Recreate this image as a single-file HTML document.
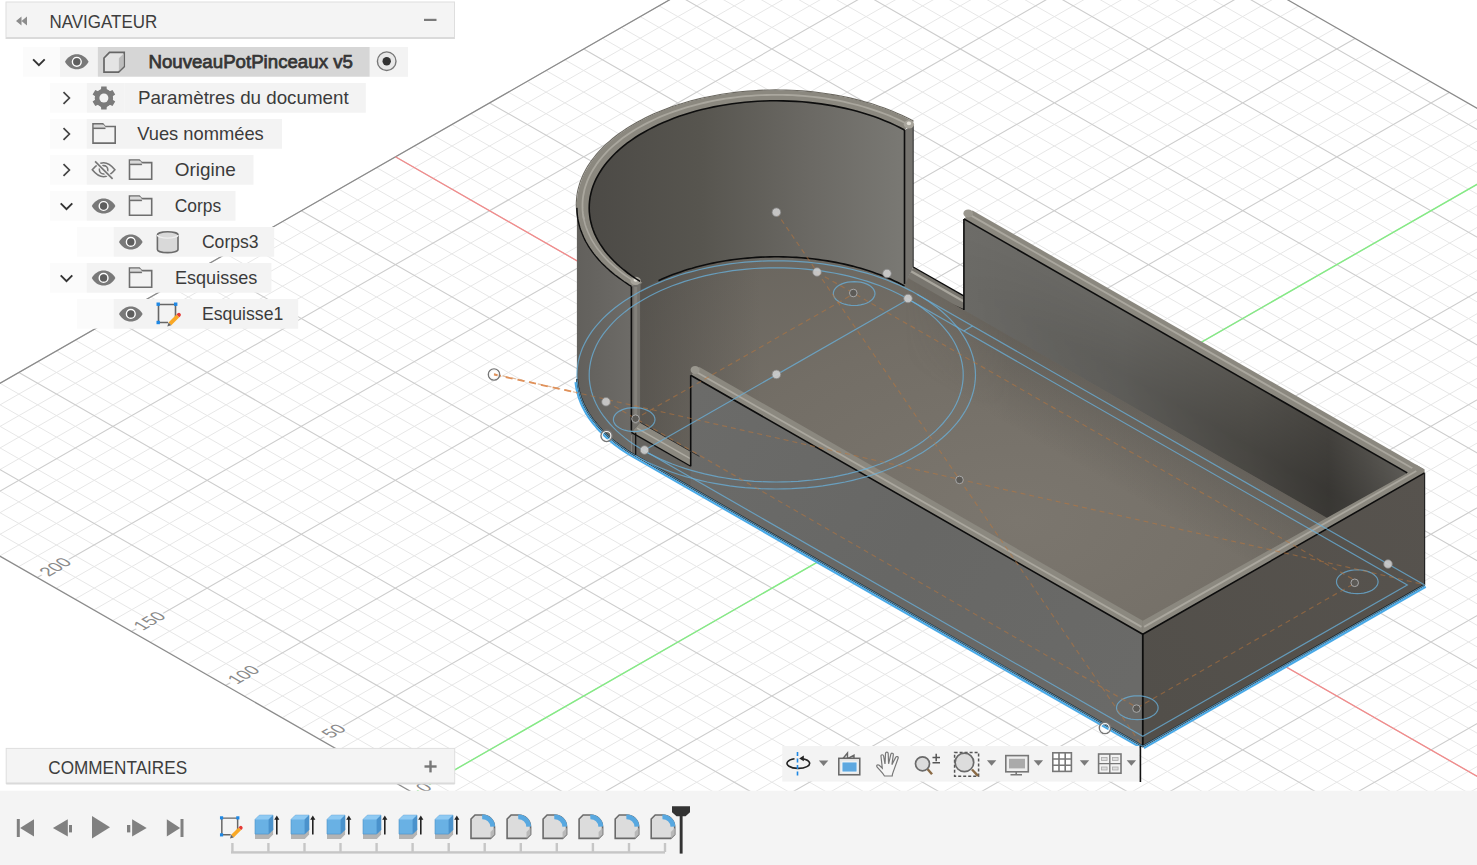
<!DOCTYPE html>
<html><head><meta charset="utf-8">
<style>
*{margin:0;padding:0}
html,body{width:1477px;height:865px;overflow:hidden;background:#fff}
</style></head><body>
<svg width="1477" height="865" viewBox="0 0 1477 865" style="position:absolute;left:0;top:0"><path d="M-132.2 480.6L997.4 -166.4M-113.4 491.4L1016.2 -155.6M-94.5 502.1L1035.1 -144.8M-75.7 512.9L1053.9 -134.1M-38.1 534.5L1091.5 -112.5M-19.2 545.3L1110.4 -101.7M-0.4 556.0L1129.2 -90.9M18.4 566.8L1148.0 -80.2M56.1 588.4L1185.7 -58.6M74.9 599.2L1204.5 -47.8M93.7 610.0L1223.3 -37.0M112.5 620.7L1242.2 -26.2M150.2 642.3L1279.8 -4.7M169.0 653.1L1298.6 6.1M187.9 663.9L1317.5 16.9M206.7 674.7L1336.3 27.7M244.3 696.2L1373.9 49.2M263.2 707.0L1392.8 60.0M282.0 717.8L1411.6 70.8M300.8 728.6L1430.4 81.6M338.5 750.1L1468.1 103.2M357.3 760.9L1486.9 113.9M376.1 771.7L1505.7 124.7M395.0 782.5L1524.6 135.5M432.6 804.1L1562.2 157.1M451.4 814.8L1581.0 167.9M470.3 825.6L1599.9 178.6M489.1 836.4L1618.7 189.4M526.7 858.0L1656.4 211.0M545.6 868.8L1675.2 221.8M564.4 879.5L1694.0 232.6M583.2 890.3L1712.8 243.3M620.9 911.9L1750.5 264.9M639.7 922.7L1769.3 275.7M658.5 933.5L1788.1 286.5M677.4 944.2L1807.0 297.3M715.0 965.8L1844.6 318.8M733.8 976.6L1863.4 329.6M752.7 987.4L1882.3 340.4M771.5 998.2L1901.1 351.2M809.1 1019.7L1938.8 372.7M828.0 1030.5L1957.6 383.5M846.8 1041.3L1976.4 394.3M865.6 1052.1L1995.2 405.1M903.3 1073.6L2032.9 426.7M922.1 1084.4L2051.7 437.4M940.9 1095.2L2070.5 448.2M959.8 1106.0L2089.4 459.0M997.4 1127.6L2127.0 480.6M1016.2 1138.3L2145.8 491.4M1035.1 1149.1L2164.7 502.1M1053.9 1159.9L2183.5 512.9M1091.5 1181.5L2221.2 534.5M1110.4 1192.2L2240.0 545.3M1129.2 1203.0L2258.8 556.0M1148.0 1213.8L2277.6 566.8M1185.7 1235.4L2315.3 588.4M1204.5 1246.2L2334.1 599.2M1223.3 1256.9L2352.9 610.0M1242.2 1267.7L2371.8 620.7M1279.8 1289.3L2409.4 642.3M1298.6 1300.1L2428.3 653.1M1317.5 1310.9L2447.1 663.9M1336.3 1321.6L2465.9 674.7M1373.9 1343.2L2503.6 696.2M1392.8 1354.0L2522.4 707.0M1411.6 1364.8L2541.2 717.8M1430.4 1375.6L2560.0 728.6M1468.1 1397.1L2597.7 750.1M1486.9 1407.9L2616.5 760.9M1505.7 1418.7L2635.3 771.7M1524.6 1429.5L2654.2 782.5M1562.2 1451.0L2691.8 804.1M1581.0 1461.8L2710.7 814.8M1599.9 1472.6L2729.5 825.6M1618.7 1483.4L2748.3 836.4M1656.4 1505.0L2786.0 858.0M1675.2 1515.7L2804.8 868.8M1694.0 1526.5L2823.6 879.5M-150.6 469.5L2135.4 1778.8M-131.7 458.7L2154.2 1768.0M-112.9 448.0L2173.1 1757.2M-94.1 437.2L2191.9 1746.5M-56.4 415.6L2229.6 1724.9M-37.6 404.8L2248.4 1714.1M-18.8 394.0L2267.2 1703.3M0.1 383.3L2286.0 1692.5M37.7 361.7L2323.7 1671.0M56.5 350.9L2342.5 1660.2M75.4 340.1L2361.3 1649.4M94.2 329.3L2380.2 1638.6M131.8 307.8L2417.8 1617.1M150.7 297.0L2436.7 1606.3M169.5 286.2L2455.5 1595.5M188.3 275.4L2474.3 1584.7M226.0 253.9L2512.0 1563.1M244.8 243.1L2530.8 1552.4M263.6 232.3L2549.6 1541.6M282.5 221.5L2568.4 1530.8M320.1 199.9L2606.1 1509.2M338.9 189.2L2624.9 1498.4M357.8 178.4L2643.7 1487.7M376.6 167.6L2662.6 1476.9M414.2 146.0L2700.2 1455.3M433.1 135.2L2719.1 1444.5M451.9 124.5L2737.9 1433.8M470.7 113.7L2756.7 1423.0M508.4 92.1L2794.4 1401.4M527.2 81.3L2813.2 1390.6M546.0 70.5L2832.0 1379.8M564.9 59.8L2850.8 1369.1M602.5 38.2L2888.5 1347.5M621.3 27.4L2907.3 1336.7M640.2 16.6L2926.1 1325.9M659.0 5.8L2945.0 1315.1M696.6 -15.7L2982.6 1293.6M715.5 -26.5L3001.5 1282.8M734.3 -37.3L3020.3 1272.0M753.1 -48.1L3039.1 1261.2M790.8 -69.6L3076.8 1239.7M809.6 -80.4L3095.6 1228.9M828.4 -91.2L3114.4 1218.1M847.3 -102.0L3133.2 1207.3M884.9 -123.6L3170.9 1185.7M903.7 -134.3L3189.7 1175.0M922.6 -145.1L3208.6 1164.2M941.4 -155.9L3227.4 1153.4" stroke="#e7e7e7" stroke-width="1" fill="none"/><path d="M-151.0 469.8L978.6 -177.2M-56.9 523.7L1072.7 -123.3M37.2 577.6L1166.9 -69.4M131.4 631.5L1261.0 -15.5M225.5 685.4L1355.1 38.5M319.6 739.4L1449.3 92.4M413.8 793.3L1543.4 146.3M507.9 847.2L1637.5 200.2M602.0 901.1L1731.7 254.1M696.2 955.0L1825.8 308.0M790.3 1008.9L1919.9 362.0M884.5 1062.9L2014.1 415.9M978.6 1116.8L2108.2 469.8M1072.7 1170.7L2202.3 523.7M1166.9 1224.6L2296.5 577.6M1261.0 1278.5L2390.6 631.5M1355.1 1332.4L2484.7 685.4M1449.3 1386.3L2578.9 739.4M1543.4 1440.3L2673.0 793.3M1637.5 1494.2L2767.1 847.2M-75.3 426.4L2210.7 1735.7M18.9 372.5L2304.9 1681.8M113.0 318.6L2399.0 1627.8M207.2 264.6L2493.1 1573.9M301.3 210.7L2587.3 1520.0M395.4 156.8L2681.4 1466.1M489.6 102.9L2775.5 1412.2M583.7 49.0L2869.7 1358.3M677.8 -4.9L2963.8 1304.4M772.0 -58.9L3057.9 1250.4M866.1 -112.8L3152.1 1196.5M960.2 -166.7L3246.2 1142.6" stroke="#cdcdcd" stroke-width="1.1" fill="none"/><path d="M-151.0 469.8L978.6 -177.2M-151.0 469.8L2135.0 1779.1M978.6 -177.2L3264.6 1132.1" stroke="#8a8a8a" stroke-width="1.2" fill="none"/><line x1="395.4" y1="156.8" x2="2681.4" y2="1466.1" stroke="#f48a8a" stroke-width="1.3"/><line x1="413.8" y1="793.3" x2="1543.4" y2="146.3" stroke="#84ec84" stroke-width="1.4"/><g transform="matrix(0.866 -0.496 0.866 0.496 413.8 793.3)"><rect x="5.5" y="-8" width="12.3" height="14.5" fill="#fff"/><text x="7.2" y="6" font-size="18.5" fill="#8a8a8a" font-family="Liberation Sans, sans-serif" textLength="9.3" lengthAdjust="spacingAndGlyphs">0</text></g><g transform="matrix(0.866 -0.496 0.866 0.496 319.6 739.4)"><rect x="5.5" y="-8" width="21.7" height="14.5" fill="#fff"/><text x="7.2" y="6" font-size="18.5" fill="#8a8a8a" font-family="Liberation Sans, sans-serif" textLength="18.7" lengthAdjust="spacingAndGlyphs">50</text></g><g transform="matrix(0.866 -0.496 0.866 0.496 225.5 685.4)"><rect x="5.5" y="-8" width="31.0" height="14.5" fill="#fff"/><text x="7.2" y="6" font-size="18.5" fill="#8a8a8a" font-family="Liberation Sans, sans-serif" textLength="28.0" lengthAdjust="spacingAndGlyphs">100</text></g><g transform="matrix(0.866 -0.496 0.866 0.496 131.4 631.5)"><rect x="5.5" y="-8" width="31.0" height="14.5" fill="#fff"/><text x="7.2" y="6" font-size="18.5" fill="#8a8a8a" font-family="Liberation Sans, sans-serif" textLength="28.0" lengthAdjust="spacingAndGlyphs">150</text></g><g transform="matrix(0.866 -0.496 0.866 0.496 37.2 577.6)"><rect x="5.5" y="-8" width="31.0" height="14.5" fill="#fff"/><text x="7.2" y="6" font-size="18.5" fill="#8a8a8a" font-family="Liberation Sans, sans-serif" textLength="28.0" lengthAdjust="spacingAndGlyphs">200</text></g><defs>
<linearGradient id="gInner" x1="590" y1="0" x2="905" y2="0" gradientUnits="userSpaceOnUse">
<stop offset="0" stop-color="#4c4a46"/><stop offset="0.35" stop-color="#57554f"/><stop offset="0.7" stop-color="#6b6964"/><stop offset="1" stop-color="#7a7974"/></linearGradient>
<linearGradient id="gBack" x1="963" y1="0" x2="1420" y2="0" gradientUnits="userSpaceOnUse">
<stop offset="0" stop-color="#6e6d69"/><stop offset="0.35" stop-color="#676662"/><stop offset="0.62" stop-color="#56544f"/><stop offset="0.8" stop-color="#44423e"/><stop offset="1" stop-color="#62605b"/></linearGradient>
<radialGradient id="gFloor" cx="1020" cy="520" r="520" gradientUnits="userSpaceOnUse" gradientTransform="translate(1020 520) scale(1 0.6) rotate(28) translate(-1020 -520)">
<stop offset="0" stop-color="#7b766e"/><stop offset="0.6" stop-color="#736e66"/><stop offset="1" stop-color="#6a665f"/></radialGradient>
<linearGradient id="gOuterCyl" x1="577" y1="0" x2="636" y2="0" gradientUnits="userSpaceOnUse">
<stop offset="0" stop-color="#62605c"/><stop offset="1" stop-color="#6e6c68"/></linearGradient>
<linearGradient id="gFront" x1="690" y1="400" x2="1140" y2="680" gradientUnits="userSpaceOnUse">
<stop offset="0" stop-color="#6b6b69"/><stop offset="0.5" stop-color="#676765"/><stop offset="1" stop-color="#6a6a68"/></linearGradient>
<linearGradient id="gEnd" x1="1143" y1="700" x2="1425" y2="480" gradientUnits="userSpaceOnUse">
<stop offset="0" stop-color="#524f4a"/><stop offset="1" stop-color="#57534e"/></linearGradient>
</defs><polygon points="640.1,281.4 635.8,278.7 631.7,275.9 627.7,273.0 623.9,270.0 620.3,267.0 616.8,263.9 613.6,260.8 610.5,257.5 607.6,254.3 604.9,250.9 602.5,247.5 600.2,244.1 598.1,240.6 596.3,237.1 594.6,233.6 593.2,230.0 592.0,226.4 591.0,222.8 590.2,219.1 589.7,215.5 589.3,211.8 589.2,208.2 589.3,204.5 589.6,200.8 590.1,197.2 590.9,193.5 591.8,189.9 593.0,186.3 594.4,182.7 596.0,179.2 597.9,175.6 599.9,172.2 602.1,168.7 604.6,165.3 607.2,162.0 610.1,158.7 613.1,155.5 616.3,152.3 619.8,149.2 623.4,146.2 627.1,143.2 631.1,140.3 635.2,137.5 639.5,134.8 644.0,132.2 648.6,129.6 653.3,127.2 658.2,124.8 663.3,122.5 668.4,120.4 673.7,118.3 679.1,116.3 684.7,114.5 690.3,112.8 696.1,111.1 701.9,109.6 707.8,108.2 713.8,106.9 719.9,105.8 726.0,104.7 732.2,103.8 738.5,103.0 744.8,102.3 751.1,101.8 757.5,101.3 763.8,101.0 770.2,100.8 776.6,100.8 783.1,100.9 789.4,101.1 795.8,101.4 802.2,101.8 808.5,102.4 814.8,103.1 821.0,103.9 827.2,104.9 833.4,105.9 839.4,107.1 845.4,108.4 851.3,109.8 857.1,111.3 862.9,113.0 868.5,114.7 874.0,116.6 879.4,118.6 884.7,120.7 889.8,122.8 894.9,125.1 899.7,127.5 904.5,130.0 904.5,289.0 899.7,286.5 894.9,284.1 889.8,281.8 884.7,279.7 879.4,277.6 874.0,275.6 868.5,273.7 862.9,272.0 857.1,270.3 851.3,268.8 845.4,267.4 839.4,266.1 833.4,264.9 827.2,263.9 821.0,262.9 814.8,262.1 808.5,261.4 802.2,260.8 795.8,260.4 789.4,260.1 783.1,259.9 776.6,259.8 770.2,259.8 763.8,260.0 757.5,260.3 751.1,260.8 744.8,261.3 738.5,262.0 732.2,262.8 726.0,263.7 719.9,264.8 713.8,265.9 707.8,267.2 701.9,268.6 696.1,270.1 690.3,271.8 684.7,273.5 679.1,275.3 673.7,277.3 668.4,279.4 663.3,281.5 658.2,283.8 653.3,286.2 648.6,288.6 644.0,291.2 639.5,293.8 635.2,296.5 631.1,299.3 627.1,302.2 623.4,305.2 619.8,308.2 616.3,311.3 613.1,314.5 610.1,317.7 607.2,321.0 604.6,324.3 602.1,327.7 599.9,331.2 597.9,334.6 596.0,338.2 594.4,341.7 593.0,345.3 591.8,348.9 590.9,352.5 590.1,356.2 589.6,359.8 589.3,363.5 589.2,367.2 589.3,370.8 589.7,374.5 590.2,378.1 591.0,381.8 592.0,385.4 593.2,389.0 594.6,392.6 596.3,396.1 598.1,399.6 600.2,403.1 602.5,406.5 604.9,409.9 607.6,413.3 610.5,416.5 613.6,419.8 616.8,422.9 620.3,426.0 623.9,429.0 627.7,432.0 631.7,434.9 635.8,437.7 640.1,440.4" fill="url(#gInner)" /><polygon points="904.5,283.9 913.2,267.0 972.5,300.9 963.9,309.9" fill="#78756e" /><polyline points="911.0,271.2 967.8,303.7" fill="none" stroke="#a9a69d" stroke-width="2.2" /><polyline points="913.2,267.0 972.5,300.9" fill="none" stroke="#0d0d0d" stroke-width="1.4" /><polyline points="904.5,283.9 963.9,309.9" fill="none" stroke="#0d0d0d" stroke-width="1.4" /><polygon points="963.9,312.9 963.9,218.9 1407.3,472.9 1407.3,566.9" fill="url(#gBack)" /><linearGradient id="gBackV" gradientUnits="userSpaceOnUse" x1="1168.2" y1="336.0" x2="1118.6" y2="422.6"><stop offset="0" stop-color="#000" stop-opacity="0"/><stop offset="0.55" stop-color="#000" stop-opacity="0.62"/><stop offset="1" stop-color="#000" stop-opacity="0.5"/></linearGradient><linearGradient id="gBackH" gradientUnits="userSpaceOnUse" x1="963" y1="0" x2="1420" y2="0"><stop offset="0" stop-color="#fff" stop-opacity="0.05"/><stop offset="0.6" stop-color="#fff" stop-opacity="0.25"/><stop offset="1" stop-color="#fff" stop-opacity="0.3"/></linearGradient><mask id="mBack" maskUnits="userSpaceOnUse" x="0" y="0" width="1477" height="865"><polygon points="963.9,312.9 963.9,218.9 1407.3,472.9 1407.3,566.9" fill="url(#gBackH)"/></mask><polygon points="963.9,312.9 963.9,218.9 1407.3,472.9 1407.3,566.9" fill="url(#gBackV)" mask="url(#mBack)"/><polygon points="640.1,437.4 635.8,434.7 631.7,431.9 627.7,429.0 623.9,426.0 620.3,423.0 616.8,419.9 613.6,416.8 610.5,413.5 607.6,410.3 604.9,406.9 602.5,403.5 600.2,400.1 598.1,396.6 596.3,393.1 594.6,389.6 593.2,386.0 592.0,382.4 591.0,378.8 590.2,375.1 589.7,371.5 589.3,367.8 589.2,364.2 589.3,360.5 589.6,356.8 590.1,353.2 590.9,349.5 591.8,345.9 593.0,342.3 594.4,338.7 596.0,335.2 597.9,331.6 599.9,328.2 602.1,324.7 604.6,321.3 607.2,318.0 610.1,314.7 613.1,311.5 616.3,308.3 619.8,305.2 623.4,302.2 627.1,299.2 631.1,296.3 635.2,293.5 639.5,290.8 644.0,288.2 648.6,285.6 653.3,283.2 658.2,280.8 663.3,278.5 668.4,276.4 673.7,274.3 679.1,272.3 684.7,270.5 690.3,268.8 696.1,267.1 701.9,265.6 707.8,264.2 713.8,262.9 719.9,261.8 726.0,260.7 732.2,259.8 738.5,259.0 744.8,258.3 751.1,257.8 757.5,257.3 763.8,257.0 770.2,256.8 776.6,256.8 783.1,256.9 789.4,257.1 795.8,257.4 802.2,257.8 808.5,258.4 814.8,259.1 821.0,259.9 827.2,260.9 833.4,261.9 839.4,263.1 845.4,264.4 851.3,265.8 857.1,267.3 862.9,269.0 868.5,270.7 874.0,272.6 879.4,274.6 884.7,276.7 889.8,278.8 894.9,281.1 899.7,283.5 904.5,286.0 904.5,275.9 1407.3,563.9 1142.8,715.3 640.1,427.4" fill="url(#gFloor)" /><linearGradient id="gAO" gradientUnits="userSpaceOnUse" x1="1168.2" y1="427.0" x2="1129.9" y2="493.9"><stop offset="0" stop-color="#4a4844" stop-opacity="0.35"/><stop offset="1" stop-color="#4a4844" stop-opacity="0"/></linearGradient><linearGradient id="gAOm" gradientUnits="userSpaceOnUse" x1="905" y1="0" x2="1010" y2="0"><stop offset="0" stop-color="#fff" stop-opacity="0"/><stop offset="1" stop-color="#fff" stop-opacity="1"/></linearGradient><mask id="mAO" maskUnits="userSpaceOnUse" x="0" y="0" width="1477" height="865"><rect x="0" y="0" width="1477" height="865" fill="url(#gAOm)"/></mask><polygon points="640.1,437.4 635.8,434.7 631.7,431.9 627.7,429.0 623.9,426.0 620.3,423.0 616.8,419.9 613.6,416.8 610.5,413.5 607.6,410.3 604.9,406.9 602.5,403.5 600.2,400.1 598.1,396.6 596.3,393.1 594.6,389.6 593.2,386.0 592.0,382.4 591.0,378.8 590.2,375.1 589.7,371.5 589.3,367.8 589.2,364.2 589.3,360.5 589.6,356.8 590.1,353.2 590.9,349.5 591.8,345.9 593.0,342.3 594.4,338.7 596.0,335.2 597.9,331.6 599.9,328.2 602.1,324.7 604.6,321.3 607.2,318.0 610.1,314.7 613.1,311.5 616.3,308.3 619.8,305.2 623.4,302.2 627.1,299.2 631.1,296.3 635.2,293.5 639.5,290.8 644.0,288.2 648.6,285.6 653.3,283.2 658.2,280.8 663.3,278.5 668.4,276.4 673.7,274.3 679.1,272.3 684.7,270.5 690.3,268.8 696.1,267.1 701.9,265.6 707.8,264.2 713.8,262.9 719.9,261.8 726.0,260.7 732.2,259.8 738.5,259.0 744.8,258.3 751.1,257.8 757.5,257.3 763.8,257.0 770.2,256.8 776.6,256.8 783.1,256.9 789.4,257.1 795.8,257.4 802.2,257.8 808.5,258.4 814.8,259.1 821.0,259.9 827.2,260.9 833.4,261.9 839.4,263.1 845.4,264.4 851.3,265.8 857.1,267.3 862.9,269.0 868.5,270.7 874.0,272.6 879.4,274.6 884.7,276.7 889.8,278.8 894.9,281.1 899.7,283.5 904.5,286.0 904.5,275.9 1407.3,563.9 1142.8,715.3 640.1,427.4" fill="url(#gAO)" mask="url(#mAO)"/><linearGradient id="gAOL" gradientUnits="userSpaceOnUse" x1="636" y1="0" x2="760" y2="0"><stop offset="0" stop-color="#3e3c39" stop-opacity="0.45"/><stop offset="1" stop-color="#3e3c39" stop-opacity="0"/></linearGradient><polygon points="640.1,437.4 635.8,434.7 631.7,431.9 627.7,429.0 623.9,426.0 620.3,423.0 616.8,419.9 613.6,416.8 610.5,413.5 607.6,410.3 604.9,406.9 602.5,403.5 600.2,400.1 598.1,396.6 596.3,393.1 594.6,389.6 593.2,386.0 592.0,382.4 591.0,378.8 590.2,375.1 589.7,371.5 589.3,367.8 589.2,364.2 589.3,360.5 589.6,356.8 590.1,353.2 590.9,349.5 591.8,345.9 593.0,342.3 594.4,338.7 596.0,335.2 597.9,331.6 599.9,328.2 602.1,324.7 604.6,321.3 607.2,318.0 610.1,314.7 613.1,311.5 616.3,308.3 619.8,305.2 623.4,302.2 627.1,299.2 631.1,296.3 635.2,293.5 639.5,290.8 644.0,288.2 648.6,285.6 653.3,283.2 658.2,280.8 663.3,278.5 668.4,276.4 673.7,274.3 679.1,272.3 684.7,270.5 690.3,268.8 696.1,267.1 701.9,265.6 707.8,264.2 713.8,262.9 719.9,261.8 726.0,260.7 732.2,259.8 738.5,259.0 744.8,258.3 751.1,257.8 757.5,257.3 763.8,257.0 770.2,256.8 776.6,256.8 783.1,256.9 789.4,257.1 795.8,257.4 802.2,257.8 808.5,258.4 814.8,259.1 821.0,259.9 827.2,260.9 833.4,261.9 839.4,263.1 845.4,264.4 851.3,265.8 857.1,267.3 862.9,269.0 868.5,270.7 874.0,272.6 879.4,274.6 884.7,276.7 889.8,278.8 894.9,281.1 899.7,283.5 904.5,286.0 904.5,275.9 1407.3,563.9 1142.8,715.3 640.1,427.4" fill="url(#gAOL)" /><polygon points="631.5,282.8 626.8,279.9 622.4,277.0 618.2,273.9 614.1,270.8 610.2,267.5 606.5,264.2 603.1,260.9 599.8,257.4 596.7,253.9 593.8,250.4 591.2,246.8 588.8,243.1 586.6,239.4 584.6,235.7 582.8,231.9 581.3,228.1 580.0,224.2 578.9,220.4 578.1,216.5 577.5,212.6 577.1,208.7 576.9,204.8 577.0,200.9 577.4,197.0 577.9,193.1 578.7,189.2 579.8,185.3 581.0,181.5 582.5,177.6 584.2,173.8 586.2,170.1 588.3,166.4 590.7,162.7 593.3,159.1 596.1,155.5 599.2,152.0 602.4,148.6 605.8,145.2 609.5,141.9 613.3,138.7 617.4,135.5 621.6,132.4 626.0,129.4 630.6,126.5 635.3,123.7 640.2,121.0 645.3,118.4 650.5,115.8 655.9,113.4 661.4,111.1 667.1,108.9 672.8,106.8 678.7,104.9 684.8,103.0 690.9,101.3 697.1,99.7 703.4,98.2 709.8,96.8 716.3,95.6 722.9,94.4 729.5,93.5 736.1,92.6 742.9,91.9 749.6,91.3 756.4,90.8 763.2,90.5 770.0,90.3 776.9,90.3 783.7,90.4 790.5,90.6 797.3,90.9 804.1,91.4 810.8,92.0 817.6,92.8 824.2,93.6 830.8,94.6 837.4,95.8 843.8,97.0 850.2,98.4 856.5,100.0 862.7,101.6 868.8,103.4 874.8,105.2 880.7,107.2 886.4,109.3 892.1,111.6 897.6,113.9 902.9,116.3 908.1,118.9 913.1,121.5 904.5,130.0 899.7,127.5 894.9,125.1 889.8,122.8 884.7,120.7 879.4,118.6 874.0,116.6 868.5,114.7 862.9,113.0 857.1,111.3 851.3,109.8 845.4,108.4 839.4,107.1 833.4,105.9 827.2,104.9 821.0,103.9 814.8,103.1 808.5,102.4 802.2,101.8 795.8,101.4 789.4,101.1 783.1,100.9 776.6,100.8 770.2,100.8 763.8,101.0 757.5,101.3 751.1,101.8 744.8,102.3 738.5,103.0 732.2,103.8 726.0,104.7 719.9,105.8 713.8,106.9 707.8,108.2 701.9,109.6 696.1,111.1 690.3,112.8 684.7,114.5 679.1,116.3 673.7,118.3 668.4,120.4 663.3,122.5 658.2,124.8 653.3,127.2 648.6,129.6 644.0,132.2 639.5,134.8 635.2,137.5 631.1,140.3 627.1,143.2 623.4,146.2 619.8,149.2 616.3,152.3 613.1,155.5 610.1,158.7 607.2,162.0 604.6,165.3 602.1,168.7 599.9,172.2 597.9,175.6 596.0,179.2 594.4,182.7 593.0,186.3 591.8,189.9 590.9,193.5 590.1,197.2 589.6,200.8 589.3,204.5 589.2,208.2 589.3,211.8 589.7,215.5 590.2,219.1 591.0,222.8 592.0,226.4 593.2,230.0 594.6,233.6 596.3,237.1 598.1,240.6 600.2,244.1 602.5,247.5 604.9,250.9 607.6,254.3 610.5,257.5 613.6,260.8 616.8,263.9 620.3,267.0 623.9,270.0 627.7,273.0 631.7,275.9 635.8,278.7 640.1,281.4" fill="#8b887f" /><polygon points="633.9,287.8 630.3,285.6 626.8,283.4 623.5,281.2 620.2,278.9 617.0,276.6 614.0,274.2 611.0,271.7 608.2,269.3 605.5,266.8 602.9,264.2 600.4,261.6 598.0,259.0 595.8,256.3 593.6,253.6 591.6,250.9 589.7,248.1 588.0,245.4 586.3,242.6 584.8,239.7 583.5,236.9 582.2,234.0 581.1,231.1 580.1,228.2 579.3,225.3 578.5,222.4 578.0,219.4 577.5,216.5 577.2,213.5 577.0,210.6 576.9,207.6 577.0,204.7 577.2,201.7 577.6,198.7 578.1,195.8 578.7,192.9 579.4,189.9 580.3,187.0 581.3,184.1 582.5,181.2 583.7,178.4 595.6,180.2 594.4,182.9 593.3,185.6 592.3,188.3 591.5,191.0 590.8,193.8 590.2,196.5 589.8,199.3 589.5,202.0 589.3,204.8 589.2,207.6 589.2,210.3 589.4,213.1 589.7,215.9 590.1,218.6 590.7,221.4 591.4,224.1 592.1,226.9 593.1,229.6 594.1,232.3 595.3,235.0 596.6,237.7 598.0,240.3 599.5,243.0 601.1,245.6 602.9,248.1 604.8,250.7 606.8,253.2 608.9,255.7 611.1,258.2 613.4,260.6 615.8,263.0 618.4,265.4 621.0,267.7 623.8,270.0 626.6,272.2 629.6,274.4 632.7,276.6 635.8,278.7 639.0,280.7 642.4,282.7" fill="#8b887f" /><polyline points="577.8,218.4 577.2,215.3 576.8,212.1 576.5,209.0 576.3,205.9 576.3,202.8 576.5,199.7 576.8,196.6 577.2,193.5 577.8,190.4 578.6,187.3 579.5,184.2 580.5,181.1 581.7,178.1 583.0,175.1 584.5,172.1 586.1,169.1 587.8,166.1 589.7,163.2 591.7,160.3 593.9,157.5 596.2,154.6 598.6,151.9 601.2,149.1 603.9,146.4 606.7,143.7 609.7,141.1 612.7,138.5 615.9,136.0 619.2,133.5 622.7,131.1 626.2,128.7 629.8,126.4 633.6,124.2 637.5,122.0 641.4,119.9 645.5,117.8 649.7,115.8 653.9,113.8 658.3,112.0 662.7,110.2 667.2,108.4 671.8,106.8 676.5,105.2 681.3,103.7 686.1,102.2 691.0,100.8 696.0,99.6 701.0,98.3 706.0,97.2 711.2,96.2 716.3,95.2 721.5,94.3 726.8,93.5 732.1,92.7 737.4,92.1 742.8,91.5 748.1,91.1 753.5,90.7 759.0,90.4 764.4,90.1 769.8,90.0 775.3,89.9 780.7,90.0 786.1,90.1 791.6,90.3 797.0,90.5 802.4,90.9 807.8,91.4 813.1,91.9 818.5,92.5 823.8,93.2 829.0,94.0 834.3,94.9 839.5,95.8 844.6,96.8 849.7,97.9 854.7,99.1 859.7,100.4 864.6,101.7 869.5,103.1 874.2,104.6 878.9,106.2 883.6,107.8 888.1,109.6 892.6,111.3 897.0,113.2 901.3,115.1 905.5,117.1 909.6,119.1 913.6,121.2" fill="none" stroke="#6b6860" stroke-width="1.1" /><polyline points="583.9,219.3 583.3,216.4 582.9,213.4 582.6,210.4 582.5,207.4 582.5,204.4 582.6,201.4 582.9,198.4 583.3,195.5 583.9,192.5 584.5,189.5 585.4,186.6 586.4,183.6 587.5,180.7 588.7,177.8 590.1,174.9 591.6,172.1 593.3,169.2 595.1,166.4 597.0,163.6 599.0,160.9 601.2,158.2 603.5,155.5 605.9,152.8 608.5,150.2 611.2,147.7 614.0,145.1 616.9,142.7 619.9,140.2 623.0,137.8 626.3,135.5 629.6,133.2 633.1,131.0 636.7,128.8 640.3,126.7 644.1,124.6 648.0,122.6 651.9,120.7 656.0,118.8 660.1,116.9 664.4,115.2 668.7,113.5 673.0,111.9 677.5,110.3 682.0,108.8 686.6,107.4 691.3,106.1 696.0,104.8 700.8,103.6 705.6,102.5 710.5,101.4 715.4,100.4 720.4,99.5 725.4,98.7 730.5,98.0 735.6,97.3 740.7,96.7 745.8,96.2 751.0,95.8 756.2,95.4 761.4,95.2 766.6,95.0 771.8,94.9 777.0,94.8 782.2,94.9 787.4,95.0 792.7,95.2 797.8,95.5 803.0,95.9 808.2,96.4 813.3,96.9 818.4,97.5 823.5,98.2 828.5,99.0 833.6,99.8 838.5,100.7 843.4,101.7 848.3,102.8 853.1,104.0 857.9,105.2 862.6,106.5 867.2,107.8 871.8,109.3 876.3,110.8 880.7,112.4 885.1,114.0 889.4,115.7 893.6,117.5 897.7,119.4 901.7,121.3 905.6,123.2" fill="none" stroke="#aaa79e" stroke-width="1.8" /><polyline points="632.0,279.9 629.3,278.1 626.6,276.3 624.0,274.5 621.5,272.6 619.0,270.7 616.6,268.7 614.3,266.7 612.0,264.7 609.8,262.7 607.8,260.6 605.7,258.5 603.8,256.4 601.9,254.3 600.2,252.1 598.5,250.0 596.8,247.8 595.3,245.6 593.9,243.3 592.5,241.1 591.2,238.8 590.0,236.5 588.9,234.2 587.9,231.9 587.0,229.6 586.1,227.3 585.3,224.9 584.7,222.6 584.1,220.2 583.6,217.8 583.2,215.5" fill="none" stroke="#a9a69e" stroke-width="1.6" /><polygon points="904.5,285.9 904.5,129.9 913.2,125.0 913.2,267.0" fill="#75736e" /><polyline points="913.2,267.0 913.2,125.0" fill="none" stroke="#2a2a2a" stroke-width="1.0" /><ellipse cx="908.9" cy="124.4" rx="5.2" ry="4.2" fill="#a7a49b"/><ellipse cx="908.9" cy="123.4" rx="2.2" ry="1.8" fill="#e2dfd6"/><polygon points="963.9,218.9 972.5,210.4 1424.6,469.4 1407.3,472.9" fill="#8b887f" /><polyline points="969.5,214.6 1416.3,470.5" fill="none" stroke="#aaa79e" stroke-width="1.8" /><ellipse cx="968.2" cy="213.4" rx="4.8" ry="4" fill="#9a978e"/><polygon points="1407.3,472.9 1415.9,464.4 1424.6,469.4 1424.6,472.9 1142.8,634.3 1142.8,620.8" fill="#8b887f" /><polyline points="1416.3,471.0 1144.1,626.9" fill="none" stroke="#aaa79e" stroke-width="1.8" /><polygon points="690.7,375.3 699.4,366.9 1142.8,620.8 1142.8,634.3" fill="#8b887f" /><polyline points="696.4,372.0 1141.5,626.9" fill="none" stroke="#aaa79e" stroke-width="1.8" /><ellipse cx="695.1" cy="369.9" rx="4.5" ry="4" fill="#9a978e"/><polygon points="631.4,432.4 640.1,422.4 699.4,456.4 690.7,466.3" fill="#8b887f" /><polyline points="637.0,428.1 692.9,460.1" fill="none" stroke="#aeaba2" stroke-width="1.6" /><polygon points="576.9,207.9 577.0,210.1 577.1,212.2 577.3,214.4 577.5,216.5 577.8,218.7 578.2,220.8 578.7,223.0 579.2,225.1 579.8,227.3 580.5,229.4 581.3,231.5 582.1,233.6 583.0,235.7 583.9,237.8 584.9,239.9 586.0,242.0 587.2,244.0 588.4,246.1 589.7,248.1 591.1,250.1 592.5,252.1 594.0,254.1 595.6,256.1 597.2,258.0 598.9,260.0 600.6,261.9 602.4,263.8 604.3,265.6 606.3,267.5 608.3,269.3 610.3,271.1 612.4,272.9 614.6,274.7 616.9,276.4 619.2,278.1 621.5,279.8 623.9,281.5 626.4,283.1 628.9,284.8 631.5,286.3 631.5,453.3 628.9,451.8 626.4,450.1 623.9,448.5 621.5,446.8 619.2,445.1 616.9,443.4 614.6,441.7 612.4,439.9 610.3,438.1 608.3,436.3 606.3,434.5 604.3,432.6 602.4,430.8 600.6,428.9 598.9,427.0 597.2,425.0 595.6,423.1 594.0,421.1 592.5,419.1 591.1,417.1 589.7,415.1 588.4,413.1 587.2,411.0 586.0,409.0 584.9,406.9 583.9,404.8 583.0,402.7 582.1,400.6 581.3,398.5 580.5,396.4 579.8,394.3 579.2,392.1 578.7,390.0 578.2,387.8 577.8,385.7 577.5,383.5 577.3,381.4 577.1,379.2 577.0,377.1 576.9,374.9" fill="url(#gOuterCyl)" /><polygon points="631.4,432.4 631.4,286.4 640.1,281.4 640.1,422.4" fill="#73716c" /><polyline points="635.7,423.9 635.7,286.9" fill="none" stroke="#83817b" stroke-width="3" /><ellipse cx="635.7" cy="280.9" rx="5.2" ry="4.2" fill="#a7a49b"/><ellipse cx="635.7" cy="279.9" rx="2.2" ry="1.8" fill="#e2dfd6"/><polygon points="631.4,453.4 631.4,432.4 693.3,467.8 693.3,488.8" fill="#65635f" /><polygon points="690.7,487.3 690.7,375.3 1142.8,634.3 1142.8,746.3" fill="url(#gFront)" /><polygon points="1142.8,746.3 1142.8,634.3 1424.6,472.9 1424.6,584.9" fill="url(#gEnd)" /><polyline points="640.1,281.4 635.8,278.7 631.7,275.9 627.7,273.0 623.9,270.0 620.3,267.0 616.8,263.9 613.6,260.8 610.5,257.5 607.6,254.3 604.9,250.9 602.5,247.5 600.2,244.1 598.1,240.6 596.3,237.1 594.6,233.6 593.2,230.0 592.0,226.4 591.0,222.8 590.2,219.1 589.7,215.5 589.3,211.8 589.2,208.2 589.3,204.5 589.6,200.8 590.1,197.2 590.9,193.5 591.8,189.9 593.0,186.3 594.4,182.7 596.0,179.2 597.9,175.6 599.9,172.2 602.1,168.7 604.6,165.3 607.2,162.0 610.1,158.7 613.1,155.5 616.3,152.3 619.8,149.2 623.4,146.2 627.1,143.2 631.1,140.3 635.2,137.5 639.5,134.8 644.0,132.2 648.6,129.6 653.3,127.2 658.2,124.8 663.3,122.5 668.4,120.4 673.7,118.3 679.1,116.3 684.7,114.5 690.3,112.8 696.1,111.1 701.9,109.6 707.8,108.2 713.8,106.9 719.9,105.8 726.0,104.7 732.2,103.8 738.5,103.0 744.8,102.3 751.1,101.8 757.5,101.3 763.8,101.0 770.2,100.8 776.6,100.8 783.1,100.9 789.4,101.1 795.8,101.4 802.2,101.8 808.5,102.4 814.8,103.1 821.0,103.9 827.2,104.9 833.4,105.9 839.4,107.1 845.4,108.4 851.3,109.8 857.1,111.3 862.9,113.0 868.5,114.7 874.0,116.6 879.4,118.6 884.7,120.7 889.8,122.8 894.9,125.1 899.7,127.5 904.5,130.0" fill="none" stroke="#0d0d0d" stroke-width="1.6" /><polyline points="576.9,207.9 577.0,210.1 577.1,212.2 577.3,214.4 577.5,216.5 577.8,218.7 578.2,220.8 578.7,223.0 579.2,225.1 579.8,227.3 580.5,229.4 581.3,231.5 582.1,233.6 583.0,235.7 583.9,237.8 584.9,239.9 586.0,242.0 587.2,244.0 588.4,246.1 589.7,248.1 591.1,250.1 592.5,252.1 594.0,254.1 595.6,256.1 597.2,258.0 598.9,260.0 600.6,261.9 602.4,263.8 604.3,265.6 606.3,267.5 608.3,269.3 610.3,271.1 612.4,272.9 614.6,274.7 616.9,276.4 619.2,278.1 621.5,279.8 623.9,281.5 626.4,283.1 628.9,284.8 631.5,286.3" fill="none" stroke="#0d0d0d" stroke-width="1.4" /><polyline points="658.5,280.7 662.0,279.1 665.6,277.5 669.2,276.0 672.9,274.6 676.7,273.2 680.5,271.9 684.4,270.6 688.3,269.3 692.3,268.2 696.3,267.0 700.4,266.0 704.5,265.0 708.7,264.0 712.9,263.1 717.1,262.3 721.4,261.5 725.7,260.8 730.0,260.1 734.3,259.5 738.7,259.0 743.1,258.5 747.5,258.1 752.0,257.7 756.4,257.4 760.9,257.1 765.3,257.0 769.8,256.9 774.3,256.8 778.8,256.8 783.2,256.9 787.7,257.0 792.2,257.2 796.6,257.4 801.1,257.7 805.5,258.1 809.9,258.5 814.3,259.0 818.7,259.6 823.0,260.2 827.4,260.9 831.6,261.6 835.9,262.4 840.1,263.2 844.3,264.1 848.5,265.1 852.6,266.1 856.6,267.2 860.7,268.3 864.6,269.5 868.6,270.8 872.4,272.1 876.2,273.4 880.0,274.8 883.7,276.2 887.3,277.7 890.9,279.3 894.4,280.9 897.8,282.5 901.2,284.2 904.5,286.0" fill="none" stroke="#0d0d0d" stroke-width="1.6" /><polyline points="577.1,378.9 577.2,380.9 577.4,383.0 577.7,385.1 578.1,387.1 578.5,389.2 579.0,391.2 579.5,393.2 580.1,395.3 580.8,397.3 581.6,399.3 582.4,401.3 583.2,403.3 584.1,405.3 585.1,407.3 586.2,409.3 587.3,411.2 588.5,413.2 589.7,415.1 591.0,417.0 592.4,419.0 593.8,420.9 595.3,422.7 596.8,424.6 598.4,426.4 600.1,428.3 601.8,430.1 603.6,431.9 605.4,433.7 607.3,435.4 609.2,437.2 611.2,438.9 613.2,440.6 615.3,442.3 617.5,443.9 619.7,445.5 621.9,447.1 624.3,448.7 626.6,450.3 629.0,451.8 631.5,453.3" fill="none" stroke="#0d0d0d" stroke-width="2.0" /><polyline points="631.4,430.4 631.4,286.4" fill="none" stroke="#0d0d0d" stroke-width="1.6" /><polyline points="635.7,455.8 635.7,432.8" fill="none" stroke="#0d0d0d" stroke-width="1.2" /><polyline points="904.5,283.9 904.5,129.9" fill="none" stroke="#0d0d0d" stroke-width="1.6" /><polyline points="690.7,466.3 690.7,375.3" fill="none" stroke="#0d0d0d" stroke-width="1.6" /><polyline points="963.9,309.9 963.9,218.9" fill="none" stroke="#0d0d0d" stroke-width="1.6" /><polyline points="963.9,218.9 1407.3,472.9" fill="none" stroke="#0d0d0d" stroke-width="1.6" /><polyline points="690.7,375.3 1142.8,634.3 1424.6,472.9" fill="none" stroke="#0d0d0d" stroke-width="1.6" /><polyline points="1142.8,746.3 1142.8,634.3" fill="none" stroke="#0d0d0d" stroke-width="1.8" /><polyline points="1424.6,584.9 1424.6,472.9" fill="none" stroke="#222" stroke-width="1.2" /><polyline points="631.4,453.4 1142.8,746.3 1424.6,584.9" fill="none" stroke="#0d0d0d" stroke-width="2.0" /><polyline points="631.4,432.4 690.7,466.3" fill="none" stroke="#0d0d0d" stroke-width="1.3" /><polyline points="640.1,422.4 699.4,456.4" fill="none" stroke="#333" stroke-width="1.0" /><polyline points="917.1,455.6 911.5,458.7 905.6,461.7 899.6,464.5 893.3,467.2 886.9,469.8 880.3,472.2 873.6,474.5 866.7,476.6 859.6,478.5 852.5,480.3 845.2,482.0 837.8,483.4 830.3,484.7 822.7,485.9 815.1,486.8 807.4,487.6 799.6,488.2 791.8,488.7 784.0,488.9 776.2,489.0 768.4,488.9 760.6,488.7 752.8,488.2 745.0,487.6 737.3,486.8 729.7,485.9 722.1,484.7 714.6,483.4 707.2,482.0 699.9,480.3 692.8,478.5 685.7,476.6 678.8,474.5 672.1,472.2 665.5,469.8 659.1,467.2 652.8,464.5 646.8,461.7 640.9,458.7 635.3,455.6 629.9,452.4 624.7,449.0 619.7,445.6 615.0,442.0 610.5,438.3 606.3,434.5 602.3,430.7 598.7,426.7 595.2,422.7 592.1,418.6 589.3,414.4 586.7,410.2 584.4,405.9 582.4,401.5 580.8,397.2 579.4,392.8 578.3,388.3 577.6,383.9 577.1,379.4 576.9,374.9 577.1,370.4 577.6,365.9 578.3,361.5 579.4,357.0 580.8,352.6 582.4,348.3 584.4,343.9 586.7,339.6 589.3,335.4 592.1,331.2 595.2,327.1 598.7,323.1 602.3,319.1 606.3,315.3 610.5,311.5 615.0,307.8 619.7,304.2 624.7,300.8 629.9,297.4 635.3,294.2 640.9,291.1 646.8,288.1 652.8,285.3 659.1,282.6 665.5,280.0 672.1,277.6 678.8,275.3 685.7,273.2 692.8,271.3 699.9,269.5 707.2,267.8 714.6,266.4 722.1,265.1 729.7,263.9 737.3,263.0 745.0,262.2 752.8,261.6 760.6,261.1 768.4,260.9 776.2,260.8 784.0,260.9 791.8,261.1 799.6,261.6 807.4,262.2 815.1,263.0 822.7,263.9 830.3,265.1 837.8,266.4 845.2,267.8 852.5,269.5 859.6,271.3 866.7,273.2 873.6,275.3 880.3,277.6 886.9,280.0 893.3,282.6 899.6,285.3 905.6,288.1 911.5,291.1 917.1,294.2 922.5,297.4 927.7,300.8 932.7,304.2 937.4,307.8 941.9,311.5 946.1,315.3 950.1,319.1 953.7,323.1 957.2,327.1 960.3,331.2 963.1,335.4 965.7,339.6 968.0,343.9 970.0,348.3 971.6,352.6 973.0,357.0 974.1,361.5 974.8,365.9 975.3,370.4 975.5,374.9 975.3,379.4 974.8,383.9 974.1,388.3 973.0,392.8 971.6,397.2 970.0,401.5 968.0,405.9 965.7,410.2 963.1,414.4 960.3,418.6 957.2,422.7 953.7,426.7 950.1,430.7 946.1,434.5 941.9,438.3 937.4,442.0 932.7,445.6 927.7,449.0 922.5,452.4 917.1,455.6" fill="none" stroke="#6ab2dc" stroke-width="1.2" opacity="0.75"/><polyline points="908.4,450.6 903.1,453.6 897.7,456.3 892.0,459.0 886.1,461.6 880.1,464.0 873.9,466.2 867.6,468.4 861.1,470.3 854.5,472.2 847.8,473.9 840.9,475.4 834.0,476.8 827.0,478.0 819.9,479.1 812.7,480.0 805.5,480.7 798.2,481.3 790.9,481.7 783.5,481.9 776.2,482.0 768.9,481.9 761.5,481.7 754.2,481.3 746.9,480.7 739.7,480.0 732.5,479.1 725.4,478.0 718.4,476.8 711.5,475.4 704.6,473.9 697.9,472.2 691.3,470.3 684.8,468.4 678.5,466.2 672.3,464.0 666.3,461.6 660.4,459.0 654.7,456.3 649.3,453.6 644.0,450.6 638.9,447.6 634.0,444.5 629.3,441.2 624.9,437.9 620.7,434.4 616.7,430.9 613.0,427.2 609.6,423.5 606.4,419.7 603.4,415.9 600.7,412.0 598.3,408.0 596.2,404.0 594.4,399.9 592.8,395.8 591.5,391.7 590.5,387.5 589.8,383.3 589.3,379.1 589.2,374.9 589.3,370.7 589.8,366.5 590.5,362.3 591.5,358.1 592.8,354.0 594.4,349.9 596.2,345.8 598.3,341.8 600.7,337.8 603.4,333.9 606.4,330.1 609.6,326.3 613.0,322.6 616.7,318.9 620.7,315.4 624.9,311.9 629.3,308.6 634.0,305.3 638.9,302.2 644.0,299.2 649.3,296.2 654.7,293.5 660.4,290.8 666.3,288.2 672.3,285.8 678.5,283.6 684.8,281.4 691.3,279.5 697.9,277.6 704.6,275.9 711.5,274.4 718.4,273.0 725.4,271.8 732.5,270.7 739.7,269.8 746.9,269.1 754.2,268.5 761.5,268.1 768.9,267.9 776.2,267.8 783.5,267.9 790.9,268.1 798.2,268.5 805.5,269.1 812.7,269.8 819.9,270.7 827.0,271.8 834.0,273.0 840.9,274.4 847.8,275.9 854.5,277.6 861.1,279.5 867.6,281.4 873.9,283.6 880.1,285.8 886.1,288.2 892.0,290.8 897.7,293.5 903.1,296.2 908.4,299.2 913.5,302.2 918.4,305.3 923.1,308.6 927.5,311.9 931.7,315.4 935.7,318.9 939.4,322.6 942.8,326.3 946.0,330.1 949.0,333.9 951.7,337.8 954.1,341.8 956.2,345.8 958.0,349.9 959.6,354.0 960.9,358.1 961.9,362.3 962.6,366.5 963.1,370.7 963.2,374.9 963.1,379.1 962.6,383.3 961.9,387.5 960.9,391.7 959.6,395.8 958.0,399.9 956.2,404.0 954.1,408.0 951.7,412.0 949.0,415.9 946.0,419.7 942.8,423.5 939.4,427.2 935.7,430.9 931.7,434.4 927.5,437.9 923.1,441.2 918.4,444.5 913.5,447.6 908.4,450.6" fill="none" stroke="#6ab2dc" stroke-width="1.2" opacity="0.75"/><polyline points="635.3,455.6 1142.8,746.3 1424.6,584.9 917.1,294.2" fill="none" stroke="#6ab2dc" stroke-width="1.2" opacity="0.75"/><polyline points="644.0,450.6 1142.8,736.3 1407.3,584.9 908.4,299.2" fill="none" stroke="#6ab2dc" stroke-width="1.2" opacity="0.75"/><polyline points="644.0,450.6 908.4,299.2" fill="none" stroke="#6ab2dc" stroke-width="1.2" opacity="0.75"/><polyline points="963.9,330.9 972.5,325.9" fill="none" stroke="#6ab2dc" stroke-width="1.2" opacity="0.75"/><polyline points="575.6,382.1 575.9,384.8 576.3,387.5 576.8,390.1 577.5,392.8 578.2,395.4 579.0,398.1 580.0,400.7 581.0,403.3 582.2,405.9 583.5,408.5 584.8,411.0 586.3,413.6 587.9,416.1 589.5,418.6 591.3,421.0 593.2,423.5 595.2,425.9 597.2,428.3 599.4,430.7 601.7,433.0 604.0,435.3 606.5,437.6 609.0,439.9 611.7,442.1 614.4,444.3 617.2,446.4 620.1,448.5 623.1,450.6 626.2,452.6 629.3,454.6 1140.8,747.6" fill="none" stroke="#4aa9e6" stroke-width="2.2" /><polyline points="1143.9,748.1 1425.7,586.7" fill="none" stroke="#4aa9e6" stroke-width="2.2" /><polyline points="648.9,428.0 646.4,429.2 643.6,430.2 640.6,430.9 637.4,431.3 634.2,431.5 630.9,431.3 627.7,430.9 624.7,430.2 621.9,429.2 619.5,428.0 617.3,426.5 615.6,425.0 614.4,423.2 613.6,421.4 613.4,419.5 613.6,417.7 614.4,415.9 615.6,414.1 617.3,412.5 619.5,411.1 621.9,409.9 624.7,408.9 627.7,408.2 630.9,407.8 634.2,407.6 637.4,407.8 640.6,408.2 643.6,408.9 646.4,409.9 648.9,411.1 651.0,412.5 652.7,414.1 654.0,415.9 654.7,417.7 655.0,419.5 654.7,421.4 654.0,423.2 652.7,425.0 651.0,426.5 648.9,428.0" fill="none" stroke="#6ab2dc" stroke-width="1.2" opacity="0.75"/><polyline points="868.9,302.0 866.4,303.2 863.6,304.2 860.6,304.9 857.4,305.3 854.1,305.5 850.9,305.3 847.7,304.9 844.7,304.2 841.9,303.2 839.4,302.0 837.3,300.6 835.6,299.0 834.3,297.2 833.6,295.4 833.3,293.6 833.6,291.7 834.3,289.9 835.6,288.1 837.3,286.5 839.4,285.1 841.9,283.9 844.7,282.9 847.7,282.2 850.9,281.8 854.1,281.6 857.4,281.8 860.6,282.2 863.6,282.9 866.4,283.9 868.9,285.1 871.0,286.5 872.7,288.1 873.9,289.9 874.7,291.7 875.0,293.6 874.7,295.4 873.9,297.2 872.7,299.0 871.0,300.6 868.9,302.0" fill="none" stroke="#6ab2dc" stroke-width="1.2" opacity="0.75"/><polyline points="1152.0,716.1 1149.6,717.4 1146.8,718.3 1143.8,719.1 1140.6,719.5 1137.3,719.6 1134.1,719.5 1130.9,719.1 1127.9,718.3 1125.1,717.4 1122.6,716.1 1120.5,714.7 1118.8,713.1 1117.5,711.4 1116.8,709.6 1116.5,707.7 1116.8,705.9 1117.5,704.0 1118.8,702.3 1120.5,700.7 1122.6,699.3 1125.1,698.1 1127.9,697.1 1130.9,696.4 1134.1,695.9 1137.3,695.8 1140.6,695.9 1143.8,696.4 1146.8,697.1 1149.6,698.1 1152.0,699.3 1154.2,700.7 1155.9,702.3 1157.1,704.0 1157.9,705.9 1158.1,707.7 1157.9,709.6 1157.1,711.4 1155.9,713.1 1154.2,714.7 1152.0,716.1" fill="none" stroke="#6ab2dc" stroke-width="1.2" opacity="0.75"/><polyline points="1372.0,590.2 1369.5,591.4 1366.7,592.4 1363.7,593.1 1360.5,593.5 1357.3,593.7 1354.0,593.5 1350.9,593.1 1347.8,592.4 1345.0,591.4 1342.6,590.2 1340.4,588.7 1338.7,587.1 1337.5,585.4 1336.7,583.6 1336.5,581.7 1336.7,579.9 1337.5,578.0 1338.7,576.3 1340.4,574.7 1342.6,573.3 1345.0,572.1 1347.8,571.1 1350.9,570.4 1354.0,570.0 1357.3,569.8 1360.5,570.0 1363.7,570.4 1366.7,571.1 1369.5,572.1 1372.0,573.3 1374.1,574.7 1375.8,576.3 1377.1,578.0 1377.8,579.9 1378.1,581.7 1377.8,583.6 1377.1,585.4 1375.8,587.1 1374.1,588.7 1372.0,590.2" fill="none" stroke="#6ab2dc" stroke-width="1.2" opacity="0.75"/><polyline points="776.2,212.2 1142.5,746.4" fill="none" stroke="#c0773a" stroke-width="1.2" stroke-dasharray="5 4" opacity="0.5"/><polyline points="493.9,373.9 1424.8,584.7" fill="none" stroke="#c0773a" stroke-width="1.2" stroke-dasharray="5 4" opacity="0.5"/><polyline points="816.9,272.2 1357.3,581.7" fill="none" stroke="#c0773a" stroke-width="1.2" stroke-dasharray="5 4" opacity="0.5"/><polyline points="606.5,401.7 1137.3,707.7" fill="none" stroke="#c0773a" stroke-width="1.2" stroke-dasharray="5 4" opacity="0.5"/><polyline points="634.2,419.5 854.1,293.6" fill="none" stroke="#c0773a" stroke-width="1.2" stroke-dasharray="5 4" opacity="0.5"/><polyline points="1137.3,707.7 1357.3,581.7" fill="none" stroke="#c0773a" stroke-width="1.2" stroke-dasharray="5 4" opacity="0.5"/><circle cx="776.4" cy="212.2" r="4.3" fill="#cfcfcf" stroke="#888" stroke-width="0.8" opacity="0.9"/><circle cx="817.0" cy="272.0" r="4.3" fill="#cfcfcf" stroke="#888" stroke-width="0.8" opacity="0.9"/><circle cx="887.0" cy="273.5" r="4.3" fill="#cfcfcf" stroke="#888" stroke-width="0.8" opacity="0.9"/><circle cx="908.0" cy="298.5" r="4.3" fill="#cfcfcf" stroke="#888" stroke-width="0.8" opacity="0.9"/><circle cx="776.4" cy="374.4" r="4.3" fill="#cfcfcf" stroke="#888" stroke-width="0.8" opacity="0.9"/><circle cx="606.0" cy="401.8" r="4.3" fill="#cfcfcf" stroke="#888" stroke-width="0.8" opacity="0.9"/><circle cx="644.5" cy="450.0" r="4.3" fill="#cfcfcf" stroke="#888" stroke-width="0.8" opacity="0.9"/><circle cx="1388.0" cy="564.0" r="4.3" fill="#cfcfcf" stroke="#888" stroke-width="0.8" opacity="0.9"/><polyline points="494.0,374.5 577.0,392.7" fill="none" stroke="#e0915a" stroke-width="1.8" stroke-dasharray="7 5"/><circle cx="494.0" cy="374.5" r="5.6" fill="none" stroke="#777" stroke-width="1.5"/><circle cx="494.0" cy="374.5" r="4.3" fill="none" stroke="#f6f6f6" stroke-width="1.2"/><circle cx="606.6" cy="435.8" r="5.6" fill="none" stroke="#777" stroke-width="1.5"/><circle cx="606.6" cy="435.8" r="4.3" fill="none" stroke="#f6f6f6" stroke-width="1.2"/><circle cx="1105.0" cy="728.0" r="5.6" fill="none" stroke="#777" stroke-width="1.5"/><circle cx="1105.0" cy="728.0" r="4.3" fill="none" stroke="#f6f6f6" stroke-width="1.2"/><circle cx="853.3" cy="293.0" r="3.8" fill="#5c5a56" stroke="#a9a9a9" stroke-width="1"/><circle cx="635.5" cy="418.7" r="3.8" fill="#5c5a56" stroke="#a9a9a9" stroke-width="1"/><circle cx="1136.5" cy="708.6" r="3.8" fill="#5c5a56" stroke="#a9a9a9" stroke-width="1"/><circle cx="1354.7" cy="582.8" r="3.8" fill="#5c5a56" stroke="#a9a9a9" stroke-width="1"/><circle cx="959.5" cy="479.9" r="3.8" fill="#5c5a56" stroke="#a9a9a9" stroke-width="1"/><rect x="6.0" y="2.0" width="448.5" height="36.5" fill="#f4f4f4" stroke="#dedede" stroke-width="1"/><rect x="6.0" y="37.0" width="448.5" height="2.0" fill="#dadada" /><path d="M16 21l5.5-4.5v9z M21.5 21l5.5-4.5v9z" fill="#8c8c8c"/><text x="49.5" y="28.0" font-size="19" fill="#3d3d3d" font-weight="normal" font-family="Liberation Sans, sans-serif" textLength="107.7" lengthAdjust="spacingAndGlyphs" >NAVIGATEUR</text><rect x="424.0" y="18.8" width="12.5" height="2.2" fill="#7a7a7a" /><rect x="23.0" y="47.0" width="385.0" height="29.7" fill="#fbfbfb" /><rect x="60.0" y="47.0" width="37.8" height="29.7" fill="#f3f3f3" /><rect x="97.8" y="47.0" width="272.0" height="29.7" fill="#d6d6d6" /><rect x="369.8" y="47.0" width="38.2" height="29.7" fill="#f3f3f3" /><polyline points="33.1,59.3 38.9,65.1 44.7,59.3" fill="none" stroke="#333" stroke-width="1.9"/><path d="M65.0 61.8C70.3 51.8 83.3 51.8 88.6 61.8C83.3 71.8 70.3 71.8 65.0 61.8Z" fill="#797979"/><circle cx="76.8" cy="61.8" r="4.4" fill="none" stroke="#fff" stroke-width="1.4"/><circle cx="76.8" cy="61.8" r="3.4" fill="#5e5e5e"/><path d="M104.0 58.0l5.5-5.6h14.7v14.2l-5.6 5.6h-14.6z" fill="#e4e4e4" stroke="#666" stroke-width="1.7"/><path d="M118.9 58.3l4.8-4.8v12.8l-4.8 4.8z" fill="#bdbdbd"/><text x="148.4" y="67.8" font-size="19" fill="#353535" font-weight="normal" font-family="Liberation Sans, sans-serif" textLength="204.5" lengthAdjust="spacingAndGlyphs" stroke="#353535" stroke-width="0.75">NouveauPotPinceaux v5</text><circle cx="386.7" cy="61.2" r="9.3" fill="#e8e8e8" stroke="#777" stroke-width="1.4"/><circle cx="386.7" cy="61.2" r="4.2" fill="#333"/><rect x="50.0" y="83.0" width="37.0" height="29.7" fill="#fbfbfb" /><rect x="86.9" y="83.0" width="278.9" height="29.7" fill="#f3f3f3" /><rect x="124.0" y="83.0" width="0.8" height="29.7" fill="#f6f6f6" /><polyline points="63.5,92.2 69.4,98.0 63.5,103.8" fill="none" stroke="#444" stroke-width="1.7"/><polygon points="101.0,89.5 101.2,86.5 106.6,86.5 106.8,89.5 109.8,91.2 112.5,90.0 115.2,94.6 112.7,96.3 112.7,99.7 115.2,101.4 112.5,106.0 109.8,104.8 106.8,106.5 106.6,109.5 101.2,109.5 101.0,106.5 98.0,104.8 95.3,106.0 92.6,101.4 95.1,99.7 95.1,96.3 92.6,94.6 95.3,90.0 98.0,91.2" fill="#7b7b7b"/><circle cx="103.9" cy="98.0" r="9.2" fill="#7b7b7b"/><circle cx="103.9" cy="98.0" r="4.5" fill="#f3f3f3"/><text x="137.9" y="104.0" font-size="19" fill="#3b3b3b" font-weight="normal" font-family="Liberation Sans, sans-serif" textLength="210.8" lengthAdjust="spacingAndGlyphs" >Paramètres du document</text><rect x="50.0" y="119.0" width="37.0" height="29.7" fill="#fbfbfb" /><rect x="86.8" y="119.0" width="195.2" height="29.7" fill="#f3f3f3" /><polyline points="63.5,128.2 69.4,134.0 63.5,139.8" fill="none" stroke="#444" stroke-width="1.7"/><path d="M93.0 123.9h9.8l2.2 2.6h10.2v16.6h-22.2z" fill="#f3f3f3" stroke="#6e6e6e" stroke-width="1.6" stroke-linejoin="miter"/><path d="M93.8 124.7h9.8l2.2 2.6v1.9h-12z" fill="#d9d9d9"/><line x1="93.0" y1="128.3" x2="105.4" y2="128.3" stroke="#6e6e6e" stroke-width="1.5"/><text x="137.2" y="140.0" font-size="19" fill="#3b3b3b" font-weight="normal" font-family="Liberation Sans, sans-serif" textLength="126.6" lengthAdjust="spacingAndGlyphs" >Vues nommées</text><rect x="50.0" y="155.0" width="37.0" height="29.7" fill="#fbfbfb" /><rect x="86.8" y="155.0" width="166.7" height="29.7" fill="#f3f3f3" /><polyline points="63.5,164.2 69.4,170.0 63.5,175.8" fill="none" stroke="#444" stroke-width="1.7"/><path d="M92.3 169.8Q103.6 155.8 114.9 169.8Q103.6 183.8 92.3 169.8Z" fill="none" stroke="#777" stroke-width="1.6"/><circle cx="103.6" cy="169.8" r="4.2" fill="none" stroke="#777" stroke-width="1.6"/><line x1="95.1" y1="160.8" x2="112.1" y2="178.8" stroke="#f3f3f3" stroke-width="4"/><line x1="95.1" y1="161.3" x2="112.6" y2="178.8" stroke="#777" stroke-width="1.7"/><path d="M129.5 160.0h9.8l2.2 2.6h10.2v16.6h-22.2z" fill="#f3f3f3" stroke="#6e6e6e" stroke-width="1.6" stroke-linejoin="miter"/><path d="M130.3 160.8h9.8l2.2 2.6v1.9h-12z" fill="#d9d9d9"/><line x1="129.5" y1="164.4" x2="141.9" y2="164.4" stroke="#6e6e6e" stroke-width="1.5"/><text x="174.7" y="176.0" font-size="19" fill="#3b3b3b" font-weight="normal" font-family="Liberation Sans, sans-serif" textLength="61.0" lengthAdjust="spacingAndGlyphs" >Origine</text><rect x="50.0" y="191.0" width="37.0" height="29.7" fill="#fbfbfb" /><rect x="86.8" y="191.0" width="148.7" height="29.7" fill="#f3f3f3" /><polyline points="60.7,203.3 66.5,209.1 72.3,203.3" fill="none" stroke="#333" stroke-width="1.9"/><path d="M91.8 206.0C97.1 196.0 110.1 196.0 115.4 206.0C110.1 216.0 97.1 216.0 91.8 206.0Z" fill="#797979"/><circle cx="103.6" cy="206.0" r="4.4" fill="none" stroke="#fff" stroke-width="1.4"/><circle cx="103.6" cy="206.0" r="3.4" fill="#5e5e5e"/><path d="M129.5 196.0h9.8l2.2 2.6h10.2v16.6h-22.2z" fill="#f3f3f3" stroke="#6e6e6e" stroke-width="1.6" stroke-linejoin="miter"/><path d="M130.3 196.8h9.8l2.2 2.6v1.9h-12z" fill="#d9d9d9"/><line x1="129.5" y1="200.4" x2="141.9" y2="200.4" stroke="#6e6e6e" stroke-width="1.5"/><text x="174.7" y="212.0" font-size="19" fill="#3b3b3b" font-weight="normal" font-family="Liberation Sans, sans-serif" textLength="46.5" lengthAdjust="spacingAndGlyphs" >Corps</text><rect x="77.0" y="227.0" width="37.0" height="29.7" fill="#fbfbfb" /><rect x="113.8" y="227.0" width="160.4" height="29.7" fill="#f3f3f3" /><path d="M119.0 241.9C124.3 231.9 137.3 231.9 142.6 241.9C137.3 251.9 124.3 251.9 119.0 241.9Z" fill="#797979"/><circle cx="130.8" cy="241.9" r="4.4" fill="none" stroke="#fff" stroke-width="1.4"/><circle cx="130.8" cy="241.9" r="3.4" fill="#5e5e5e"/><path d="M157.4 234.9v14.5a10.3 3.2 0 0 0 20.6 0v-14.5a10.3 3.2 0 0 0 -20.6 0z" fill="#d9d9d9" stroke="#6b6b6b" stroke-width="1.6"/><path d="M157.4 234.9a10.3 3.2 0 0 0 20.6 0" fill="none" stroke="#efefef" stroke-width="1.4"/><text x="201.9" y="247.8" font-size="19" fill="#3b3b3b" font-weight="normal" font-family="Liberation Sans, sans-serif" textLength="56.7" lengthAdjust="spacingAndGlyphs" >Corps3</text><rect x="50.0" y="263.0" width="37.0" height="29.7" fill="#fbfbfb" /><rect x="86.8" y="263.0" width="184.6" height="29.7" fill="#f3f3f3" /><polyline points="60.7,275.3 66.5,281.1 72.3,275.3" fill="none" stroke="#333" stroke-width="1.9"/><path d="M91.8 277.9C97.1 267.9 110.1 267.9 115.4 277.9C110.1 287.9 97.1 287.9 91.8 277.9Z" fill="#797979"/><circle cx="103.6" cy="277.9" r="4.4" fill="none" stroke="#fff" stroke-width="1.4"/><circle cx="103.6" cy="277.9" r="3.4" fill="#5e5e5e"/><path d="M129.5 268.0h9.8l2.2 2.6h10.2v16.6h-22.2z" fill="#f3f3f3" stroke="#6e6e6e" stroke-width="1.6" stroke-linejoin="miter"/><path d="M130.3 268.8h9.8l2.2 2.6v1.9h-12z" fill="#d9d9d9"/><line x1="129.5" y1="272.4" x2="141.9" y2="272.4" stroke="#6e6e6e" stroke-width="1.5"/><text x="175.0" y="284.0" font-size="19" fill="#3b3b3b" font-weight="normal" font-family="Liberation Sans, sans-serif" textLength="82.3" lengthAdjust="spacingAndGlyphs" >Esquisses</text><rect x="77.0" y="299.0" width="37.0" height="29.7" fill="#fbfbfb" /><rect x="113.8" y="299.0" width="184.4" height="29.7" fill="#f3f3f3" /><path d="M119.0 313.9C124.3 303.9 137.3 303.9 142.6 313.9C137.3 323.9 124.3 323.9 119.0 313.9Z" fill="#797979"/><circle cx="130.8" cy="313.9" r="4.4" fill="none" stroke="#fff" stroke-width="1.4"/><circle cx="130.8" cy="313.9" r="3.4" fill="#5e5e5e"/><g transform="translate(156.0 302.0) scale(1.000)"><path d="M2.5 2.5H19.5V15M2.5 2.5V20.5H12" fill="none" stroke="#666" stroke-width="1.6"/><rect x="0.5" y="0.5" width="3.4" height="3.4" fill="#1e88e5"/><rect x="18" y="0.5" width="3.4" height="3.4" fill="#1e88e5"/><rect x="0.5" y="18.8" width="3.4" height="3.4" fill="#1e88e5"/><path d="M12.5 20.5L20.5 12.5L23.3 15.3L15.3 23.3Z" fill="#f9a825"/><path d="M20.5 12.5l1.2-1.2a2 2 0 0 1 2.8 2.8l-1.2 1.2z" fill="#e53935"/><path d="M12.5 20.5l2.8 2.8l-4 1.2z" fill="#666"/></g><text x="201.9" y="320.0" font-size="19" fill="#3b3b3b" font-weight="normal" font-family="Liberation Sans, sans-serif" textLength="81.4" lengthAdjust="spacingAndGlyphs" >Esquisse1</text><rect x="6.2" y="748.4" width="448.5" height="35.0" fill="#f4f4f4" stroke="#dedede" stroke-width="1"/><rect x="6.2" y="782.5" width="448.5" height="2.0" fill="#dadada" /><text x="48.3" y="774.3" font-size="19" fill="#3d3d3d" font-weight="normal" font-family="Liberation Sans, sans-serif" textLength="138.8" lengthAdjust="spacingAndGlyphs" >COMMENTAIRES</text><rect x="424.5" y="765.3" width="12.1" height="2.4" fill="#777" /><rect x="429.3" y="760.6" width="2.4" height="11.8" fill="#777" /><rect x="782.3" y="746.0" width="357.3" height="35.6" fill="#f3f3f3" /><rect x="1139.6" y="746.0" width="1.6" height="36.0" fill="#111" /><path d="M803.2 758.9A11.3 5 0 1 1 794.5 758.7" fill="none" stroke="#222" stroke-width="1.6"/><path d="M799.2 758.6l4.6-3v5.6z" fill="#222"/><line x1="797.5" y1="752" x2="797.5" y2="777" stroke="#1e88e5" stroke-width="1.6" stroke-dasharray="4 2.5"/><path d="M818.9 760.4h9.4l-4.7 5.6z" fill="#7a7a7a"/><path d="M843 758.5l4.5-5.5v5.5l6.5-3.3v3.3z" fill="#eee" stroke="#666" stroke-width="1.4"/><rect x="838.8" y="758.3" width="21.0" height="16.5" fill="#e8e8e8" stroke="#666" stroke-width="1.5"/><rect x="842.0" y="762.0" width="15.0" height="10.0" fill="#5ea8e0" stroke="#fff" stroke-width="0.8"/><path d="M884.5 776 C882 772 879 769.5 877 766.8 C876 765.4 877.8 764.2 879.2 765.3 L882.3 768.2 L881 756.2 C880.8 754.4 883.3 754.2 883.6 756 L885 764 L885.5 753.6 C885.6 751.6 888.1 751.6 888.2 753.6 L888.6 763.8 L890.8 754.4 C891.2 752.6 893.6 753 893.3 754.8 L891.9 764.6 L895.7 757.4 C896.5 755.8 898.7 756.6 898.1 758.3 L894.4 768.6 C893.2 772 892.2 774 892.2 776 Z" fill="#f6f6f6" stroke="#777" stroke-width="1.2"/><line x1="927.5" y1="769" x2="932" y2="774.3" stroke="#8a6a45" stroke-width="2.4"/><circle cx="922.5" cy="763.8" r="7" fill="#dcdcdc" stroke="#6a6a6a" stroke-width="1.7"/><path d="M932.5 757.6h7.5M936.2 753.8v7.5M932.5 762.8h7.5" stroke="#555" stroke-width="1.5"/><rect x="954.6" y="752.6" width="24.0" height="23.6" fill="none" stroke="#555" stroke-width="1.5" stroke-dasharray="3 2"/><line x1="972" y1="769.5" x2="978" y2="775.8" stroke="#8a6a45" stroke-width="2.4"/><circle cx="964.4" cy="762.4" r="9.3" fill="#dcdcdc" stroke="#6a6a6a" stroke-width="1.7"/><path d="M986.9 760.2h9.4l-4.7 5.6z" fill="#7a7a7a"/><rect x="1005.8" y="755.6" width="22.5" height="16.2" fill="#eee" stroke="#777" stroke-width="1.6"/><rect x="1009.0" y="758.8" width="16.0" height="9.6" fill="#aaa" /><path d="M1016.2 772v2.5M1010.5 774.8h11.5" stroke="#777" stroke-width="1.6"/><path d="M1033.7 760.2h9.4l-4.7 5.6z" fill="#7a7a7a"/><rect x="1052.8" y="752.8" width="18.6" height="18.6" fill="#fff" stroke="#777" stroke-width="1.6"/><path d="M1059 752.8v18.6M1065.2 752.8v18.6M1052.8 759h18.6M1052.8 765.2h18.6" stroke="#777" stroke-width="1.6"/><path d="M1079.8 760.2h9.4l-4.7 5.6z" fill="#7a7a7a"/><rect x="1098.6" y="754.0" width="22.4" height="19.2" fill="#f3f3f3" stroke="#777" stroke-width="1.6"/><path d="M1109.8 754v19.2M1098.6 763.6h22.4" stroke="#777" stroke-width="1.4"/><rect x="1101.6" y="757.5" width="5.5" height="3.0" fill="#ddd" stroke="#aaa" stroke-width="0.8"/><rect x="1112.6" y="757.5" width="5.5" height="3.0" fill="#ddd" stroke="#aaa" stroke-width="0.8"/><rect x="1101.6" y="767.0" width="5.5" height="3.0" fill="#ddd" stroke="#aaa" stroke-width="0.8"/><rect x="1112.6" y="767.0" width="5.5" height="3.0" fill="#ddd" stroke="#aaa" stroke-width="0.8"/><path d="M1126.7 760.2h9.4l-4.7 5.6z" fill="#7a7a7a"/><rect x="0.0" y="790.7" width="1477.0" height="75.0" fill="#f4f4f4" /><rect x="16.8" y="819.0" width="3.0" height="18.0" fill="#808080" /><path d="M34 819.3V836.6L20.1 828Z" fill="#808080"/><path d="M67.8 819.3V836.6L52.9 828Z" fill="#808080"/><rect x="69.0" y="825.0" width="3.0" height="7.4" fill="#808080" /><path d="M92 816V838.4L110 827.2Z" fill="#808080"/><rect x="127.0" y="825.0" width="3.3" height="7.4" fill="#808080" /><path d="M132.1 819.3V836.6L146.7 828Z" fill="#808080"/><path d="M166.8 819.3V836.6L180.2 828Z" fill="#808080"/><rect x="180.5" y="819.0" width="3.0" height="18.0" fill="#808080" /><rect x="231.0" y="851.2" width="434.0" height="2.4" fill="#c6c6c6" /><rect x="231.2" y="843.0" width="2.4" height="9.0" fill="#c6c6c6" /><rect x="267.2" y="843.0" width="2.4" height="9.0" fill="#c6c6c6" /><rect x="303.3" y="843.0" width="2.4" height="9.0" fill="#c6c6c6" /><rect x="339.3" y="843.0" width="2.4" height="9.0" fill="#c6c6c6" /><rect x="375.4" y="843.0" width="2.4" height="9.0" fill="#c6c6c6" /><rect x="411.4" y="843.0" width="2.4" height="9.0" fill="#c6c6c6" /><rect x="447.5" y="843.0" width="2.4" height="9.0" fill="#c6c6c6" /><rect x="483.5" y="843.0" width="2.4" height="9.0" fill="#c6c6c6" /><rect x="519.6" y="843.0" width="2.4" height="9.0" fill="#c6c6c6" /><rect x="555.6" y="843.0" width="2.4" height="9.0" fill="#c6c6c6" /><rect x="591.7" y="843.0" width="2.4" height="9.0" fill="#c6c6c6" /><rect x="627.8" y="843.0" width="2.4" height="9.0" fill="#c6c6c6" /><rect x="663.8" y="843.0" width="2.4" height="9.0" fill="#c6c6c6" /><g transform="translate(219.5 815.8) scale(0.930)"><path d="M2.5 2.5H19.5V15M2.5 2.5V20.5H12" fill="none" stroke="#666" stroke-width="1.6"/><rect x="0.5" y="0.5" width="3.4" height="3.4" fill="#1e88e5"/><rect x="18" y="0.5" width="3.4" height="3.4" fill="#1e88e5"/><rect x="0.5" y="18.8" width="3.4" height="3.4" fill="#1e88e5"/><path d="M12.5 20.5L20.5 12.5L23.3 15.3L15.3 23.3Z" fill="#f9a825"/><path d="M20.5 12.5l1.2-1.2a2 2 0 0 1 2.8 2.8l-1.2 1.2z" fill="#e53935"/><path d="M12.5 20.5l2.8 2.8l-4 1.2z" fill="#666"/></g><path d="M255.0 832v6.9h13.8l4.3-4.3v-6.9z" fill="#b4b4b4"/><path d="M255.0 819.6l4.4-4.4h13.6v14.5l-4.4 4.4h-13.6z" fill="#69b1e4" stroke="#4a90c8" stroke-width="0.6"/><path d="M273.0 815.2l-4.4 4.4h-13.6l4.4-4.4z" fill="#8fcaf3"/><path d="M268.6 819.6l4.4-4.4v14.5l-4.4 4.4z" fill="#4a92cc"/><line x1="276.8" y1="834.6" x2="276.8" y2="818" stroke="#222" stroke-width="1.6"/><path d="M276.8 815.5l-2.6 4.2h5.2z" fill="#222"/><path d="M291.0 832v6.9h13.8l4.3-4.3v-6.9z" fill="#b4b4b4"/><path d="M291.0 819.6l4.4-4.4h13.6v14.5l-4.4 4.4h-13.6z" fill="#69b1e4" stroke="#4a90c8" stroke-width="0.6"/><path d="M309.0 815.2l-4.4 4.4h-13.6l4.4-4.4z" fill="#8fcaf3"/><path d="M304.6 819.6l4.4-4.4v14.5l-4.4 4.4z" fill="#4a92cc"/><line x1="312.8" y1="834.6" x2="312.8" y2="818" stroke="#222" stroke-width="1.6"/><path d="M312.8 815.5l-2.6 4.2h5.2z" fill="#222"/><path d="M327.0 832v6.9h13.8l4.3-4.3v-6.9z" fill="#b4b4b4"/><path d="M327.0 819.6l4.4-4.4h13.6v14.5l-4.4 4.4h-13.6z" fill="#69b1e4" stroke="#4a90c8" stroke-width="0.6"/><path d="M345.0 815.2l-4.4 4.4h-13.6l4.4-4.4z" fill="#8fcaf3"/><path d="M340.6 819.6l4.4-4.4v14.5l-4.4 4.4z" fill="#4a92cc"/><line x1="348.8" y1="834.6" x2="348.8" y2="818" stroke="#222" stroke-width="1.6"/><path d="M348.8 815.5l-2.6 4.2h5.2z" fill="#222"/><path d="M363.0 832v6.9h13.8l4.3-4.3v-6.9z" fill="#b4b4b4"/><path d="M363.0 819.6l4.4-4.4h13.6v14.5l-4.4 4.4h-13.6z" fill="#69b1e4" stroke="#4a90c8" stroke-width="0.6"/><path d="M381.0 815.2l-4.4 4.4h-13.6l4.4-4.4z" fill="#8fcaf3"/><path d="M376.6 819.6l4.4-4.4v14.5l-4.4 4.4z" fill="#4a92cc"/><line x1="384.8" y1="834.6" x2="384.8" y2="818" stroke="#222" stroke-width="1.6"/><path d="M384.8 815.5l-2.6 4.2h5.2z" fill="#222"/><path d="M399.0 832v6.9h13.8l4.3-4.3v-6.9z" fill="#b4b4b4"/><path d="M399.0 819.6l4.4-4.4h13.6v14.5l-4.4 4.4h-13.6z" fill="#69b1e4" stroke="#4a90c8" stroke-width="0.6"/><path d="M417.0 815.2l-4.4 4.4h-13.6l4.4-4.4z" fill="#8fcaf3"/><path d="M412.6 819.6l4.4-4.4v14.5l-4.4 4.4z" fill="#4a92cc"/><line x1="420.8" y1="834.6" x2="420.8" y2="818" stroke="#222" stroke-width="1.6"/><path d="M420.8 815.5l-2.6 4.2h5.2z" fill="#222"/><path d="M435.0 832v6.9h13.8l4.3-4.3v-6.9z" fill="#b4b4b4"/><path d="M435.0 819.6l4.4-4.4h13.6v14.5l-4.4 4.4h-13.6z" fill="#69b1e4" stroke="#4a90c8" stroke-width="0.6"/><path d="M453.0 815.2l-4.4 4.4h-13.6l4.4-4.4z" fill="#8fcaf3"/><path d="M448.6 819.6l4.4-4.4v14.5l-4.4 4.4z" fill="#4a92cc"/><line x1="456.8" y1="834.6" x2="456.8" y2="818" stroke="#222" stroke-width="1.6"/><path d="M456.8 815.5l-2.6 4.2h5.2z" fill="#222"/><path d="M471.0 838.4V819l4-4h7.5a12 12 0 0 1 12 12v7.4l-4 4z" fill="#dcdcdc" stroke="#6a6a6a" stroke-width="1.6"/><path d="M490.5 838.4l4-4v-6.4l-4 4z" fill="#b8b8b8"/><path d="M482.1 814.4A12.6 12.6 0 0 1 495.1 826.6L490.3 826.7A7.8 7.8 0 0 0 482.2 819.2Z" fill="#58a8e0"/><path d="M507.1 838.4V819l4-4h7.5a12 12 0 0 1 12 12v7.4l-4 4z" fill="#dcdcdc" stroke="#6a6a6a" stroke-width="1.6"/><path d="M526.5 838.4l4-4v-6.4l-4 4z" fill="#b8b8b8"/><path d="M518.1 814.4A12.6 12.6 0 0 1 531.1 826.6L526.3 826.7A7.8 7.8 0 0 0 518.3 819.2Z" fill="#58a8e0"/><path d="M543.1 838.4V819l4-4h7.5a12 12 0 0 1 12 12v7.4l-4 4z" fill="#dcdcdc" stroke="#6a6a6a" stroke-width="1.6"/><path d="M562.6 838.4l4-4v-6.4l-4 4z" fill="#b8b8b8"/><path d="M554.2 814.4A12.6 12.6 0 0 1 567.2 826.6L562.4 826.7A7.8 7.8 0 0 0 554.3 819.2Z" fill="#58a8e0"/><path d="M579.1 838.4V819l4-4h7.5a12 12 0 0 1 12 12v7.4l-4 4z" fill="#dcdcdc" stroke="#6a6a6a" stroke-width="1.6"/><path d="M598.6 838.4l4-4v-6.4l-4 4z" fill="#b8b8b8"/><path d="M590.2 814.4A12.6 12.6 0 0 1 603.2 826.6L598.4 826.7A7.8 7.8 0 0 0 590.4 819.2Z" fill="#58a8e0"/><path d="M615.2 838.4V819l4-4h7.5a12 12 0 0 1 12 12v7.4l-4 4z" fill="#dcdcdc" stroke="#6a6a6a" stroke-width="1.6"/><path d="M634.7 838.4l4-4v-6.4l-4 4z" fill="#b8b8b8"/><path d="M626.3 814.4A12.6 12.6 0 0 1 639.3 826.6L634.5 826.7A7.8 7.8 0 0 0 626.4 819.2Z" fill="#58a8e0"/><path d="M651.2 838.4V819l4-4h7.5a12 12 0 0 1 12 12v7.4l-4 4z" fill="#dcdcdc" stroke="#6a6a6a" stroke-width="1.6"/><path d="M670.8 838.4l4-4v-6.4l-4 4z" fill="#b8b8b8"/><path d="M662.3 814.4A12.6 12.6 0 0 1 675.3 826.6L670.5 826.7A7.8 7.8 0 0 0 662.5 819.2Z" fill="#58a8e0"/><path d="M672 806.2h18v6l-4.5 4h-9l-4.5-4z" fill="#333"/><rect x="679.7" y="812.0" width="2.9" height="41.6" fill="#333" /></svg>
</body></html>
